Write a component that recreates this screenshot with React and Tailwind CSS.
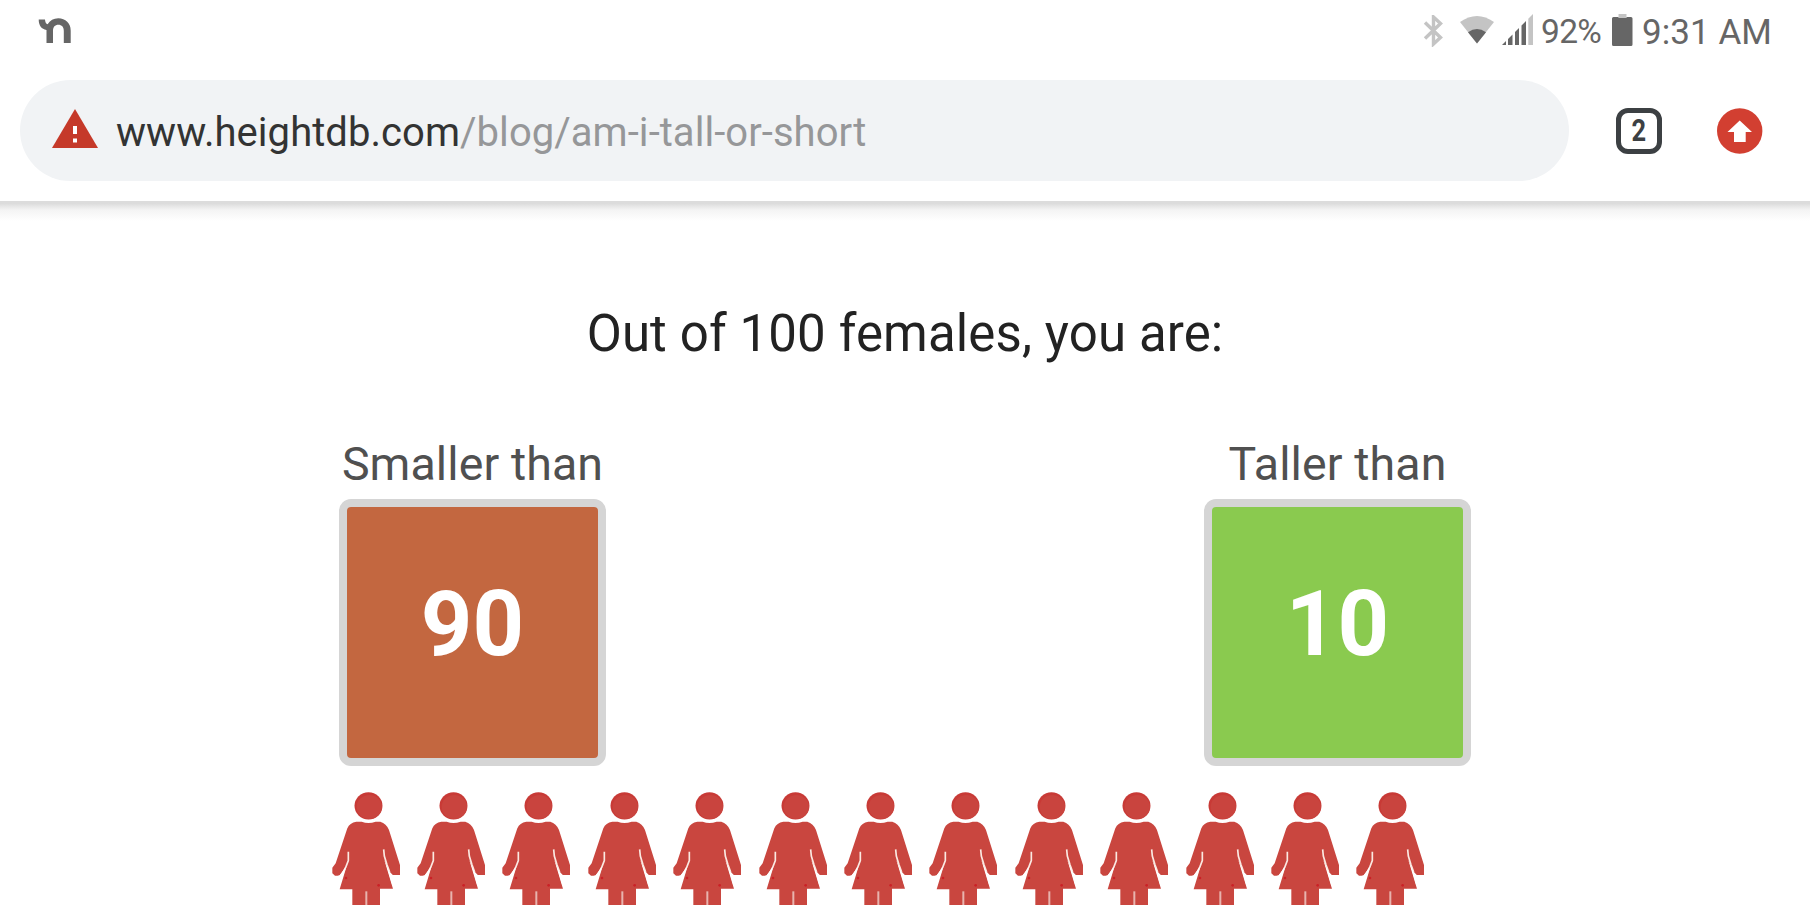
import React from "react";

const women = Array.from({ length: 13 }, (_, i) => i);

const Woman = () => {
  return (
    <svg
      className="w-[85.4px] h-[135px] shrink-0"
      viewBox="20 0 256.2 405"
      fill="#c9463f"
    >
      <ellipse cx="144.500" cy="107.500" rx="42" ry="41" fill="#c83a36" />
      <ellipse cx="147" cy="111" rx="38" ry="36" fill="#c9443e" />
      <path d="M108 155H124Q144 163 166 155H180Q198 160 206 180L239 285V315H217L209 306L192 270L218 356H179V405H96V358H58L78 292L57 317H44L36 310V293L46 280L81 175Q88 158 108 155Z" />
      <path
        d="M84 245V272L77 290L66 312M190 238L192 258L200 284L208 306"
        fill="none"
        stroke="#fbe9e2"
        strokeWidth="5"
      />
      <path
        d="M78 288L54 358H40V322L58 316ZM198 284L208 308L217 315V350Z"
        fill="#fff"
      />
      <path d="M138 364V405" stroke="#e8b3ae" strokeWidth="6" />
      <circle cx="77" cy="324" r="4" fill="#cb2026" />
      <circle cx="175" cy="346" r="4" fill="#cb2026" />
    </svg>
  );
};

const StatusBar = () => {
  return (
    <div className="flex items-start justify-between h-20 pl-[38px] pr-[39px] text-[#666666]">
      <svg className="w-[34px] h-[26px] mt-[18px]" viewBox="0 0 34 26">
        <path
          d="M.7 1.500H7C7.200 4 8 5.800 9.600 6.200C12 2.500 15.500.3 20.300.3C27.500.3 32.700 5.300 32.700 12.500V25H25.800V13C25.800 9 23.700 6.800 20.300 6.800C17 6.800 15 9 15 13V25H8.500V12C3.500 11.200.7 7.500.7 1.500Z"
          fill="currentColor"
        />
      </svg>
      <div className="flex items-start">
        <svg className="w-[20px] h-[32px] mt-[15px]" viewBox="0 0 20 32">
          <path
            d="M2 7.500L17.500 22.500L10.500 29V2L17.500 8.500L2 23.500"
            fill="none"
            stroke="#c4c4c4"
            strokeWidth="3.400"
          />
        </svg>
        <svg
          className="w-[36px] h-[28px] mt-[16px] ml-[16px]"
          viewBox="0 0 36 28"
        >
          <path d="M1 6Q18 -6 35 6L18 27.500Z" fill="#c4c4c4" />
          <path d="M9 16.200Q18 9.800 27 16.200L18 27.500Z" fill="currentColor" />
        </svg>
        <svg
          className="w-[32px] h-[31px] mt-[14px] ml-[6px]"
          viewBox="0 0 32 31"
          fill="currentColor"
        >
          <path d="M1 31L5 27V31ZM7 25L11.500 20.500V31H7ZM14 18L18 14V31H14ZM20.500 11.500L25 7V31H20.500Z" />
          <path d="M27.300 4.700L32 0V31H27.300Z" fill="#c4c4c4" />
        </svg>
        <span className="w-[60px] ml-[8px] mt-[12px] text-[33.500px] leading-[40px] tracking-[-0.7px] whitespace-nowrap">
          92%
        </span>
        <svg className="w-[21px] h-[32px] mt-[14px] ml-[11px]" viewBox="0 0 21 32">
          <path d="M6.500 0H14.500V4H6.500Z" fill="#c4c4c4" />
          <path
            d="M0 4.500Q0 3 1.500 3H6.500V4H14.500V3H19Q20.500 3 20.500 4.500V30.500Q20.500 32 19 32H1.500Q0 32 0 30.500Z"
            fill="currentColor"
          />
        </svg>
        <span className="w-[129px] ml-[9px] mt-[12px] text-[35px] leading-[41px] tracking-[0.05px] whitespace-nowrap">
          9:31 AM
        </span>
      </div>
    </div>
  );
};

const AddressBar = () => {
  return (
    <div className="flex items-center h-[101px] pl-5 pr-[47px]">
      <div className="flex items-center w-[1549px] h-full rounded-full bg-[#f1f3f5] pl-8">
        <svg className="w-[46px] h-[39px] mb-[5px]" viewBox="0 0 46 39">
          <path d="M23 0L46 39H0Z" fill="#c53929" />
          <path d="M21 17H25V25H21ZM21 29.500H25V33.500H21Z" fill="#fff" />
        </svg>
        <div className="ml-[18px] mt-[4px] text-[40px] leading-[48px] tracking-[0.05px] text-[#333333] whitespace-nowrap">
          www.heightdb.com
          <span className="text-[#969799]">/blog/am-i-tall-or-short</span>
        </div>
      </div>
      <div className="flex items-center justify-center w-[46px] h-[46px] ml-[47px] rounded-[12px] border-[5px] border-[#3c4043] text-[#3c4043]">
        <span className="text-[31px] leading-[36px] font-bold scale-x-[0.82]">
          2
        </span>
      </div>
      <svg className="w-[46px] h-[46px] ml-auto" viewBox="0 0 46 46">
        <circle cx="22.700" cy="23" r="22.700" fill="#d23f31" />
        <path d="M22.700 12.500L35 24H28.700V34H17V24H10.500Z" fill="#fff" />
      </svg>
    </div>
  );
};

const ScoreBox = ({ label, value, color }) => {
  return (
    <div className="w-[267px] flex flex-col items-center">
      <div className="text-[46.500px] leading-[56px] tracking-[0.1px] text-[#505050] whitespace-nowrap">
        {label}
      </div>
      <div
        className={`w-[267px] h-[267px] mt-[7px] flex items-center justify-center rounded-[12px] border-8 border-[#d5d5d5] text-white text-[90px] font-bold leading-[106px] pb-[15px] ${color}`}
      >
        {value}
      </div>
    </div>
  );
};

const App = () => {
  return (
    <div className="w-[1810px] h-[905px] overflow-hidden bg-white font-['Roboto',sans-serif]">
      <div className="h-[201px]">
        <StatusBar />
        <AddressBar />
      </div>
      <div className="h-[20px] bg-linear-to-b from-[#dcdcdc] from-12% via-[#f4f4f4] via-45% to-white" />
      <h1 className="mt-[83px] text-center text-[51px] leading-[60px] tracking-[0.12px] text-[#222222]">
        Out of 100 females, you are:
      </h1>
      <div className="flex justify-between w-[1132px] mx-auto mt-[72px]">
        <ScoreBox label="Smaller than" value="90" color="bg-[#c36740]" />
        <ScoreBox label="Taller than" value="10" color="bg-[#8aca4f]" />
      </div>
      <div className="flex pl-[326.700px] mt-[4px]">
        {women.map((id) => (
          <Woman key={id} />
        ))}
      </div>
    </div>
  );
};

export default App;
